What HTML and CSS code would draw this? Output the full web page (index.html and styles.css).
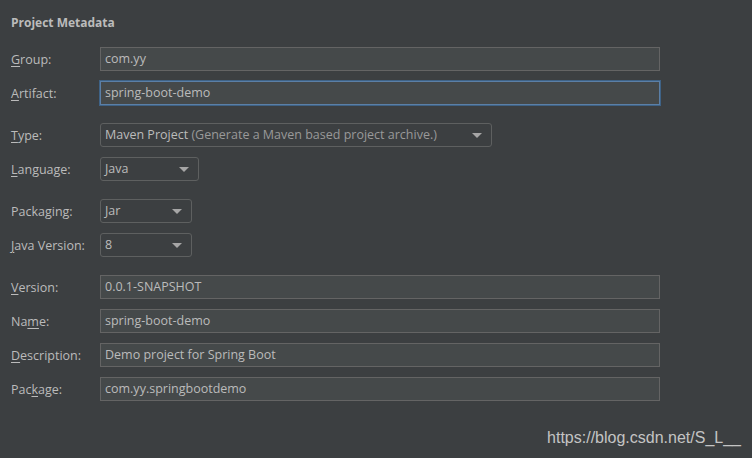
FILE: index.html
```html
<!DOCTYPE html>
<html>
<head>
<meta charset="utf-8">
<link rel="stylesheet" href="styles.css">
</head>
<body>
<div class="panel">
  <div class="title">Project Metadata</div>
  <div class="section">
    <div class="row"><label class="lbl"><u>G</u>roup:</label><div class="field">com.yy</div></div>
    <div class="row"><label class="lbl"><u>A</u>rtifact:</label><div class="field focus">spring-boot-demo</div></div>
  </div>
  <div class="section">
    <div class="row"><label class="lbl"><u>T</u>ype:</label><div class="combo w-type"><span>Maven Project <span class="dim">(Generate a Maven based project archive.)</span></span><i class="arrow"></i></div></div>
    <div class="row"><label class="lbl"><u>L</u>anguage:</label><div class="combo w-lang"><span>Java</span><i class="arrow"></i></div></div>
  </div>
  <div class="section">
    <div class="row"><label class="lbl">Packa<u>g</u>ing:</label><div class="combo w-small"><span>Jar</span><i class="arrow"></i></div></div>
    <div class="row"><label class="lbl"><u>J</u>ava Version:</label><div class="combo w-small"><span>8</span><i class="arrow"></i></div></div>
  </div>
  <div class="section">
    <div class="row"><label class="lbl"><u>V</u>ersion:</label><div class="field">0.0.1-SNAPSHOT</div></div>
    <div class="row"><label class="lbl">Na<u>m</u>e:</label><div class="field">spring-boot-demo</div></div>
    <div class="row"><label class="lbl"><u>D</u>escription:</label><div class="field">Demo project for Spring Boot</div></div>
    <div class="row"><label class="lbl">Pac<u>k</u>age:</label><div class="field">com.yy.springbootdemo</div></div>
  </div>
  <div class="watermark">https://blog.csdn.net/S_L__</div>
</div>
</body>
</html>
```
FILE: styles.css
```css
html, body {
  margin: 0;
  padding: 0;
  background: #3c3f41;
}
.panel {
  width: 752px;
  height: 458px;
  box-sizing: border-box;
  padding: 14px 0 0 11px;
  font-family: "Open Sans", "Noto Sans", sans-serif;
  font-size: 12.5px;
  color: #bbbbbb;
  display: flex;
  flex-direction: column;
}
.title {
  font-weight: bold;
  font-size: 12px;
  height: 17px;
  line-height: 17px;
  margin-bottom: 16px;
}
.section {
  display: flex;
  flex-direction: column;
  gap: 10px;
  margin-bottom: 18px;
}
.row {
  display: flex;
  align-items: center;
  height: 24px;
}
.lbl {
  width: 89px;
  flex: none;
}
u {
  text-decoration-thickness: 1px;
  text-underline-offset: 2px;
}
.field {
  width: 560px;
  height: 24px;
  box-sizing: border-box;
  background: #45494a;
  border: 1px solid #646464;
  padding: 0 4px;
  line-height: 22px;
  white-space: nowrap;
}
.field.focus {
  border-color: #5b7fa6;
  outline: 1px solid #3e6286;
}
.combo {
  height: 24px;
  box-sizing: border-box;
  border: 1px solid #5e6060;
  border-radius: 3px;
  background: #3c3f41;
  padding: 0 9px 0 4px;
  display: flex;
  align-items: center;
  justify-content: space-between;
  line-height: 22px;
  white-space: nowrap;
}
.w-type { width: 392px; }
.w-lang { width: 99px; }
.w-small { width: 92px; }
.dim { color: #999999; }
.arrow {
  width: 0;
  height: 0;
  border-left: 5px solid transparent;
  border-right: 5px solid transparent;
  border-top: 5px solid #a6a6a6;
}
.watermark {
  margin-top: auto;
  margin-bottom: 11px;
  align-self: flex-end;
  margin-right: 11px;
  font-family: "Liberation Sans", Arial, sans-serif;
  font-size: 16px;
  color: #c4c4c4;
}
```
